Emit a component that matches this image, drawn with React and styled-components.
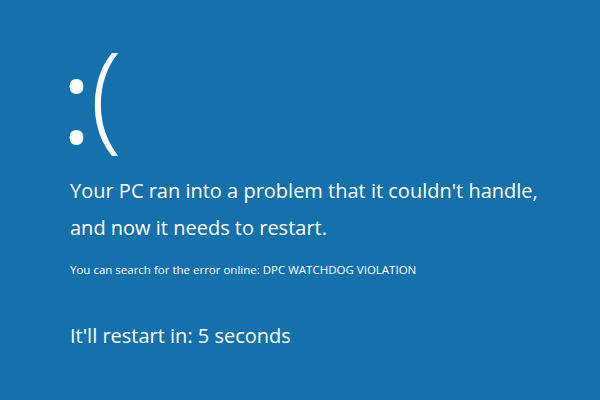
import React from "react";
import styled, { createGlobalStyle } from "styled-components";

const GlobalStyle = createGlobalStyle`
  html, body {
    margin: 0;
    padding: 0;
    background: #1570ab;
  }
`;

const Screen = styled.div`
  width: 600px;
  height: 400px;
  box-sizing: border-box;
  padding: 40px 0 0 70px;
  background: #1570ab;
  color: #ffffff;
  font-family: "Open Sans", "Noto Sans", sans-serif;
  overflow: hidden;
`;

const Face = styled.div`
  margin-left: -9px;
  font-size: 118px;
  font-weight: 350;
  line-height: 104px;
  height: 130px;
  letter-spacing: -2px;
`;

const Eyes = styled.span`
  font-weight: 500;
  vertical-align: -6px;
`;

const Message = styled.p`
  margin: 0;
  margin-top: ${props => props.top || 0}px;
  font-size: ${props => props.size}px;
  line-height: ${props => props.lh}px;
`;

const App = () => (
  <>
    <GlobalStyle />
    <Screen>
      <Face>
        <Eyes>:</Eyes>(
      </Face>
      <Message size={20} lh={37} top={2}>
        Your PC ran into a problem that it couldn't handle,
        <br />
        and now it needs to restart.
      </Message>
      <Message size={11.5} lh={16} top={16}>
        You can search for the error online: DPC WATCHDOG VIOLATION
      </Message>
      <Message size={20} lh={28} top={44}>
        It'll restart in: 5 seconds
      </Message>
    </Screen>
  </>
);

export default App;
